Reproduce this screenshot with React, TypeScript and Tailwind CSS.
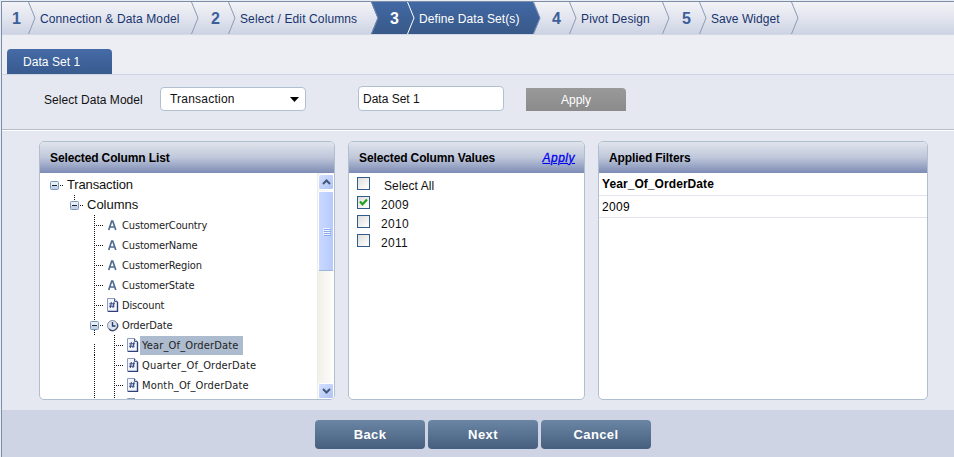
import clsx from 'clsx'
import type { ReactNode } from 'react'

type NodeIcon = 'text' | 'number' | 'clock'

const steps = [
  { number: 1, label: 'Connection & Data Model', numClass: 'w-[26px] pl-[10px]', labelClass: 'w-[155px] pl-[4px] tracking-[0.12px]' },
  { number: 2, label: 'Select / Edit Columns', numClass: 'w-[29px] pl-[12px]', labelClass: 'w-[135px] pl-[4px] tracking-[0.12px]' },
  { number: 3, label: 'Define Data Set(s)', numClass: 'w-[28px] pl-[11px]', labelClass: 'w-[118px] pl-[4px] tracking-[0.1px]', active: true },
  { number: 4, label: 'Pivot Design', numClass: 'w-[28px] pl-[11px]', labelClass: 'w-[85px] pl-[4px] tracking-[0.13px]' },
  { number: 5, label: 'Save Widget', numClass: 'w-[29px] pl-[12px]', labelClass: 'w-[84px] pl-[4px] tracking-[0.05px]' },
]

const textColumns = ['CustomerCountry', 'CustomerName', 'CustomerRegion', 'CustomerState']
const dateColumns = ['Year_Of_OrderDate', 'Quarter_Of_OrderDate', 'Month_Of_OrderDate']

const values = [
  { label: 'Select All', checked: false },
  { label: '2009', checked: true },
  { label: '2010', checked: false },
  { label: '2011', checked: false },
]

function Chevron({ left, right, stroke }: { left?: string; right?: string; stroke: string }) {
  return (
    <svg className="shrink-0" width="8" height="32" viewBox="0 0 8 32">
      {left && <path d="M0 0L7 16L0 32Z" fill={left} />}
      {right && <path d="M0 0H8V32H0L6.5 16Z" fill={right} />}
      <path d="M0.5 0L7 16L0.5 32" fill="none" stroke={stroke} strokeWidth="1" />
    </svg>
  )
}

function Wizard() {
  return (
    <div className="flex h-[33px] border-b border-[#d3d8e6] bg-linear-to-b from-[#f2f3f7] via-[#e2e5ef] to-[#cdd3e3]">
      {steps.map((step, i) => {
        const nextActive = steps[i + 1]?.active
        return (
          <div key={step.number} className="flex h-8">
            <div
              className={clsx(
                'text-[16px] leading-[33px] font-bold',
                step.numClass,
                step.active ? 'bg-linear-to-b from-[#4269a4] to-[#385988] text-white' : 'text-[#3d5f99]',
              )}
            >
              {step.number}
            </div>
            <div className={clsx('flex', step.active && 'bg-linear-to-b from-[#4269a4] to-[#385988]')}>
              <Chevron stroke={step.active ? '#ffffff' : '#8d9bb2'} />
              <div
                className={clsx(
                  'pt-px text-[12px] leading-[33px] whitespace-nowrap',
                  step.labelClass,
                  step.active ? 'text-white' : 'text-[#17346c]',
                )}
              >
                {step.label}
              </div>
            </div>
            <Chevron
              left={step.active ? 'url(#stepFill)' : undefined}
              right={nextActive ? 'url(#stepFill)' : undefined}
              stroke={step.active || nextActive ? '#6d87b0' : '#8d9bb2'}
            />
          </div>
        )
      })}
      <svg className="absolute" width="0" height="0">
        <defs>
          <linearGradient id="stepFill" gradientUnits="userSpaceOnUse" x1="0" y1="0" x2="0" y2="32">
            <stop offset="0" stopColor="#4269a4" />
            <stop offset="1" stopColor="#385988" />
          </linearGradient>
        </defs>
      </svg>
    </div>
  )
}

function Panel({ title, action, className, children }: { title: string; action?: ReactNode; className: string; children: ReactNode }) {
  return (
    <section className={clsx('flex h-[259px] flex-col overflow-hidden rounded-[5px] border border-[#b0bfd0] bg-white', className)}>
      <header className="flex h-[31px] shrink-0 items-center justify-between bg-linear-to-b from-[#e0e4ec] via-[#bfc7da] to-[#7e8cb5] pr-[9px] pl-[10px] text-[12px] font-bold text-black">
        <span className="tracking-[-0.12px]">{title}</span>
        {action}
      </header>
      {children}
    </section>
  )
}

// Dotted connector drawn left of a node
function Branch({ wide, tick = true, from = 0 }: { wide?: boolean; tick?: boolean; from?: number }) {
  return (
    <svg className="shrink-0" width={wide ? 20 : 17} height="20" shapeRendering="crispEdges">
      <path d={`M4.5 ${from}V20`} stroke="#111" strokeDasharray="1 1" />
      {tick && <path d="M6 10.5H14" stroke="#111" strokeDasharray="1 1" />}
    </svg>
  )
}

function Toggle({ above, below }: { above?: boolean; below?: boolean }) {
  return (
    <svg className="shrink-0" width="17" height="20">
      {above && <path d="M4.5 0V6" stroke="#111" strokeDasharray="1 1" shapeRendering="crispEdges" />}
      {below && <path d="M4.5 15V20" stroke="#111" strokeDasharray="1 1" shapeRendering="crispEdges" />}
      <rect x="0.5" y="6.5" width="8" height="8" rx="1" fill="#e8edf4" stroke="#7897bc" />
      <path d="M1 12.5H8" stroke="#c5d3e4" strokeWidth="3" />
      <path d="M2 10.5H7" stroke="#17233c" />
      <path d="M10 10.5H13" stroke="#111" strokeDasharray="1 1" shapeRendering="crispEdges" />
    </svg>
  )
}

function ColumnIcon({ type }: { type: NodeIcon }) {
  if (type === 'text') {
    return (
      <svg className="mr-[3px] shrink-0" width="12" height="14" viewBox="0 0 12 14">
        <path d="M1.7 12L4.7 3H5.7L8.8 12M3 9H7.5" fill="none" stroke="#526b92" strokeWidth="1.7" />
      </svg>
    )
  }
  if (type === 'clock') {
    return (
      <svg className="mr-[3px] shrink-0" width="12" height="14" viewBox="0 0 12 14">
        <circle cx="5.5" cy="7.5" r="5" fill="#dce3ee" stroke="#7d8898" />
        <path d="M10.2 5.5A5 5 0 0 1 2 11" fill="none" stroke="#3d4c70" strokeWidth="1.3" />
        <path d="M5.5 4V8H8.5" fill="none" stroke="#273c70" strokeWidth="1.4" />
      </svg>
    )
  }
  return (
    <svg className="mr-[3px] shrink-0" width="12" height="14" viewBox="0 0 12 14">
      <path d="M0.5 0.5H7.5L10.5 3.5V13.5H0.5Z" fill="#f2f5fb" stroke="#8e9dbd" />
      <path d="M10.5 4V13.5H1" fill="none" stroke="#2f3f77" strokeWidth="1.4" />
      <path d="M7.5 0.5V3.5H10.5" fill="#c9d3e6" stroke="#4b5d8e" />
      <path d="M4.4 4L3.3 10M7 4L5.9 10M2.3 5.8H8M2 8.2H7.6" fill="none" stroke="#34467f" strokeWidth="1" />
    </svg>
  )
}

function NodeLabel({ children, selected, wide }: { children: ReactNode; selected?: boolean; wide?: boolean }) {
  return (
    <span
      className={clsx(
        "-ml-[2px] h-[19px] px-[2px] font-['DejaVu_Sans_Condensed','DejaVu_Sans','Noto_Sans',sans-serif] text-[11px] leading-[19px] whitespace-nowrap text-[#222]",
        wide ? 'tracking-[0.16px]' : 'tracking-[-0.15px]',
        selected && 'w-[103px] bg-[#adbbce]',
      )}
    >
      {children}
    </span>
  )
}

function ColumnTree() {
  return (
    <div className="min-w-0 flex-1 overflow-hidden pt-[2px] pl-[10px] text-[#111]">
      <div className="flex h-5 items-center text-[13px] tracking-[-0.15px]">
        <Toggle />
        Transaction
      </div>
      <div className="flex h-5 items-center pl-[20px] text-[13px]">
        <Toggle above />
        Columns
      </div>
      {textColumns.map((name) => (
        <div key={name} className="flex h-5 items-center pl-[40px]">
          <Branch />
          <ColumnIcon type="text" />
          <NodeLabel>{name}</NodeLabel>
        </div>
      ))}
      <div className="flex h-5 items-center pl-[40px]">
        <Branch />
        <ColumnIcon type="number" />
        <NodeLabel>Discount</NodeLabel>
      </div>
      <div className="flex h-5 items-center pl-[40px]">
        <Toggle above below />
        <ColumnIcon type="clock" />
        <NodeLabel>OrderDate</NodeLabel>
      </div>
      {dateColumns.map((name, i) => (
        <div key={name} className="flex h-5 items-center pl-[40px]">
          <Branch wide tick={false} from={i === 0 ? 9 : 0} />
          <Branch />
          <ColumnIcon type="number" />
          <NodeLabel wide selected={i === 0}>
            {name}
          </NodeLabel>
        </div>
      ))}
      {/* next node, only its top edge is scrolled into view */}
      <div className="flex h-5 items-center pl-[40px]">
        <Branch wide tick={false} />
        <Branch />
        <ColumnIcon type="number" />
      </div>
    </div>
  )
}

function ScrollButton({ down }: { down?: boolean }) {
  return (
    <div className="flex h-4 shrink-0 items-center justify-center rounded-[2px] border border-white bg-linear-to-br from-[#d4e0ff] to-[#afc3f4]">
      <svg className={clsx(down && 'rotate-180')} width="9" height="6" viewBox="0 0 9 6">
        <path d="M1 5L4.5 1.5L8 5" fill="none" stroke="#425878" strokeWidth="2" />
      </svg>
    </div>
  )
}

function ScrollBar() {
  return (
    <div className="flex w-[17px] shrink-0 flex-col border-l border-[#eeede5] bg-linear-to-r from-[#f1f0e9] to-[#fefefb] pt-px">
      <ScrollButton />
      <div className="mt-px flex h-[80px] flex-col items-center justify-center gap-px rounded-[2px] border border-white border-b-[#9fb5da] bg-linear-to-r from-[#c8d8ff] to-[#b7cafb]">
        {[0, 1, 2, 3].map((i) => (
          <div key={i} className="h-px w-[7px] bg-[#eef4ff] shadow-[1px_1px_0_#8ca9ea]" />
        ))}
      </div>
      <div className="flex-1" />
      <ScrollButton down />
    </div>
  )
}

function CheckBox({ checked }: { checked: boolean }) {
  return (
    <span className="flex size-[13px] items-center justify-center border border-[#315b88] bg-linear-to-br from-[#dedfdc] to-white">
      {checked && (
        <svg width="9" height="9" viewBox="0 0 9 9">
          <path d="M1 3.5L3.5 6.3L8 1.5" fill="none" stroke="#21a121" strokeWidth="2.2" />
        </svg>
      )}
    </span>
  )
}

function FooterButton({ children }: { children: ReactNode }) {
  return (
    <button className="h-[29px] w-[110px] rounded-[4px] bg-linear-to-b from-[#6b86a4] to-[#465f7e] text-[13px] font-bold tracking-[0.4px] text-white">
      {children}
    </button>
  )
}

export default function App() {
  return (
    <div className="h-[457px] w-[954px] overflow-hidden bg-[#e9edf3] pl-px font-['Liberation_Sans',Arial,sans-serif]">
      <div className="mt-px h-[456px] border-t border-l border-[#7b8ea8] bg-[#e5e8f1]">
        <Wizard />

        <div className="flex h-[40px] items-end border-b border-[#cdd4e4] bg-[#edeef4] pl-[5px]">
          <div className="h-[25px] w-[105px] rounded-t-[4px] bg-linear-to-b from-[#456ba6] to-[#385a8f] pl-4 text-[12px] leading-[26px] tracking-[0.05px] text-white">
            Data Set 1
          </div>
        </div>

        <div className="flex h-[55px] items-start border-b border-[#b8bec8] pt-[11px] text-[12px] text-[#111]">
          <span className="ml-[42px] w-[116px] pt-[7px] leading-[14px] tracking-[0.04px]">Select Data Model</span>
          <div className="mt-px flex h-[24px] w-[146px] items-center justify-between rounded-[4px] border border-[#b0c0d0] bg-white pr-[6px] pl-[9px] tracking-[0.22px]">
            Transaction
            <svg width="9" height="5" viewBox="0 0 9 5">
              <path d="M0 0H9L4.5 5Z" fill="#000" />
            </svg>
          </div>
          <input
            className="ml-[52px] h-[25px] w-[146px] rounded-[4px] border border-[#b0c0d0] bg-white pl-[4px]"
            defaultValue="Data Set 1"
          />
          <button className="mt-[2px] ml-[22px] h-[23px] w-[100px] rounded-tr-[4px] bg-linear-to-b from-[#999] to-[#8b8b8b] text-white">
            Apply
          </button>
        </div>

        <div className="flex h-[280px] gap-[13px] border-t border-white pt-[10px] pl-[37px]">
          <Panel title="Selected Column List" className="w-[296px]">
            <div className="flex min-h-0 flex-1">
              <ColumnTree />
              <ScrollBar />
            </div>
          </Panel>

          <Panel
            title="Selected Column Values"
            className="w-[237px]"
            action={
              <a href="#" className="font-normal tracking-[0.5px] text-[#0000f0] italic underline [-webkit-text-stroke:0.3px]">
                Apply
              </a>
            }
          >
            <div className="pt-[4px] pl-[8px] text-[12px] text-[#111]">
              {values.map((value, i) => (
                <label key={value.label} className="flex h-[19px] items-start">
                  <CheckBox checked={value.checked} />
                  <span className={clsx('pt-[2px] leading-[14px]', i === 0 ? 'ml-[14px] tracking-[0.1px]' : 'ml-[11px] tracking-[0.3px]')}>
                    {value.label}
                  </span>
                </label>
              ))}
            </div>
          </Panel>

          <Panel title="Applied Filters" className="w-[330px]">
            <div className="text-[12px] text-black">
              <div className="h-[23px] border-b border-[#e2e5ee] pl-[3px] leading-[23px] font-bold tracking-[0.07px]">Year_Of_OrderDate</div>
              <div className="h-[22px] border-b border-[#e2e5ee] pl-[3px] leading-[22px] tracking-[0.3px]">2009</div>
            </div>
          </Panel>
        </div>

        <div className="flex h-[47px] gap-[3px] bg-[#cfd4e4] pt-[10px] pl-[313px]">
          <FooterButton>Back</FooterButton>
          <FooterButton>Next</FooterButton>
          <FooterButton>Cancel</FooterButton>
        </div>
      </div>
    </div>
  )
}
